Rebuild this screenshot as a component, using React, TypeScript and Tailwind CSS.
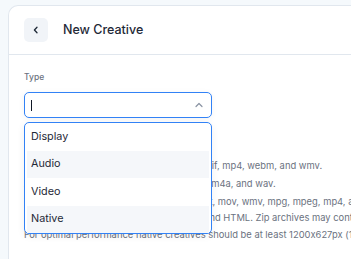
import React from "react";

export default function App() {
  const items = [
    { label: "Display", shade: false },
    { label: "Audio", shade: true },
    { label: "Video", shade: false },
    { label: "Native", shade: true },
  ];
  return (
    <div className="w-[351px] h-[259px] overflow-hidden bg-[#f5f9fc] pl-2 pt-[5px] font-['Inter',sans-serif] [font-feature-settings:'calt'_0]">
      <div className="h-full w-full bg-white border-l border-t border-[#e1e7ee] rounded-tl-[10px]">
        <div className="h-[49px] flex items-center px-[15px] border-b border-[#e1e7ee]">
          <div className="w-6 h-6 rounded-[5px] bg-[#f1f4f8] flex items-center justify-center">
            <svg width="8" height="8" viewBox="0 0 8 8" fill="none">
              <path d="M5 1.2L2.4 4L5 6.8" stroke="#1f2937" strokeWidth="1.3" strokeLinecap="round" strokeLinejoin="round" />
            </svg>
          </div>
          <div className="ml-[15px] text-[12.5px] font-medium text-[#1f2937] leading-none">New Creative</div>
        </div>
        <div className="px-[15px] pt-[16px]">
          <div className="text-[8.5px] leading-[12px] font-medium text-[#6b7280]">Type</div>
          <div className="relative w-[188px] mt-[9px]">
            <div className="h-[26px] border border-[#3282f6] rounded-[5px] bg-white flex items-center justify-between pl-[6px] pr-[8px] shadow-[0_1px_6px_rgba(0,0,0,0.05)]">
              <div className="w-px h-[11px] bg-[#111827]" />
              <svg width="8" height="6" viewBox="0 0 8 6" fill="none">
                <path d="M1 4.5L4 1.5L7 4.5" stroke="#8a93a3" strokeWidth="1.2" strokeLinecap="round" strokeLinejoin="round" />
              </svg>
            </div>
            <div className="absolute left-0 top-[30px] w-full border border-[#3282f6] rounded-[5px] bg-white px-[2px] z-10 shadow-[0_2px_8px_rgba(0,0,0,0.06)]">
              {items.map((it) => (
                <div
                  key={it.label}
                  className={`h-[27.5px] flex items-center pl-[4px] pr-[5px] text-[10.8px] text-[#1f2937] ${it.shade ? "bg-[#f5f7fa]" : ""}`}
                >
                  {it.label}
                </div>
              ))}
            </div>
          </div>
          <div className="mt-[39px] text-[9.4px] leading-[17px] text-[#6b7280] whitespace-nowrap">
            <div className="leading-[18px]">Display creatives can be jpg, webp, png, gif, mp4, webm, and wmv.</div>
            <div className="leading-[18px]">Audio creatives can be mp3, ogg, flac, ra, m4a, and wav.</div>
            <div>Video creatives can be 3gp, avi, flv, f4v, qt, mov, wmv, mpg, mpeg, mp4, and webm.</div>
            <div className="leading-[16.5px]">Native creatives can be jpg, png, gif, zip and HTML. Zip archives may contain HTML.</div>
            <div className="leading-[16.5px]">For optimal performance native creatives should be at least 1200x627px (1.91:1).</div>
          </div>
        </div>
      </div>
    </div>
  );
}
